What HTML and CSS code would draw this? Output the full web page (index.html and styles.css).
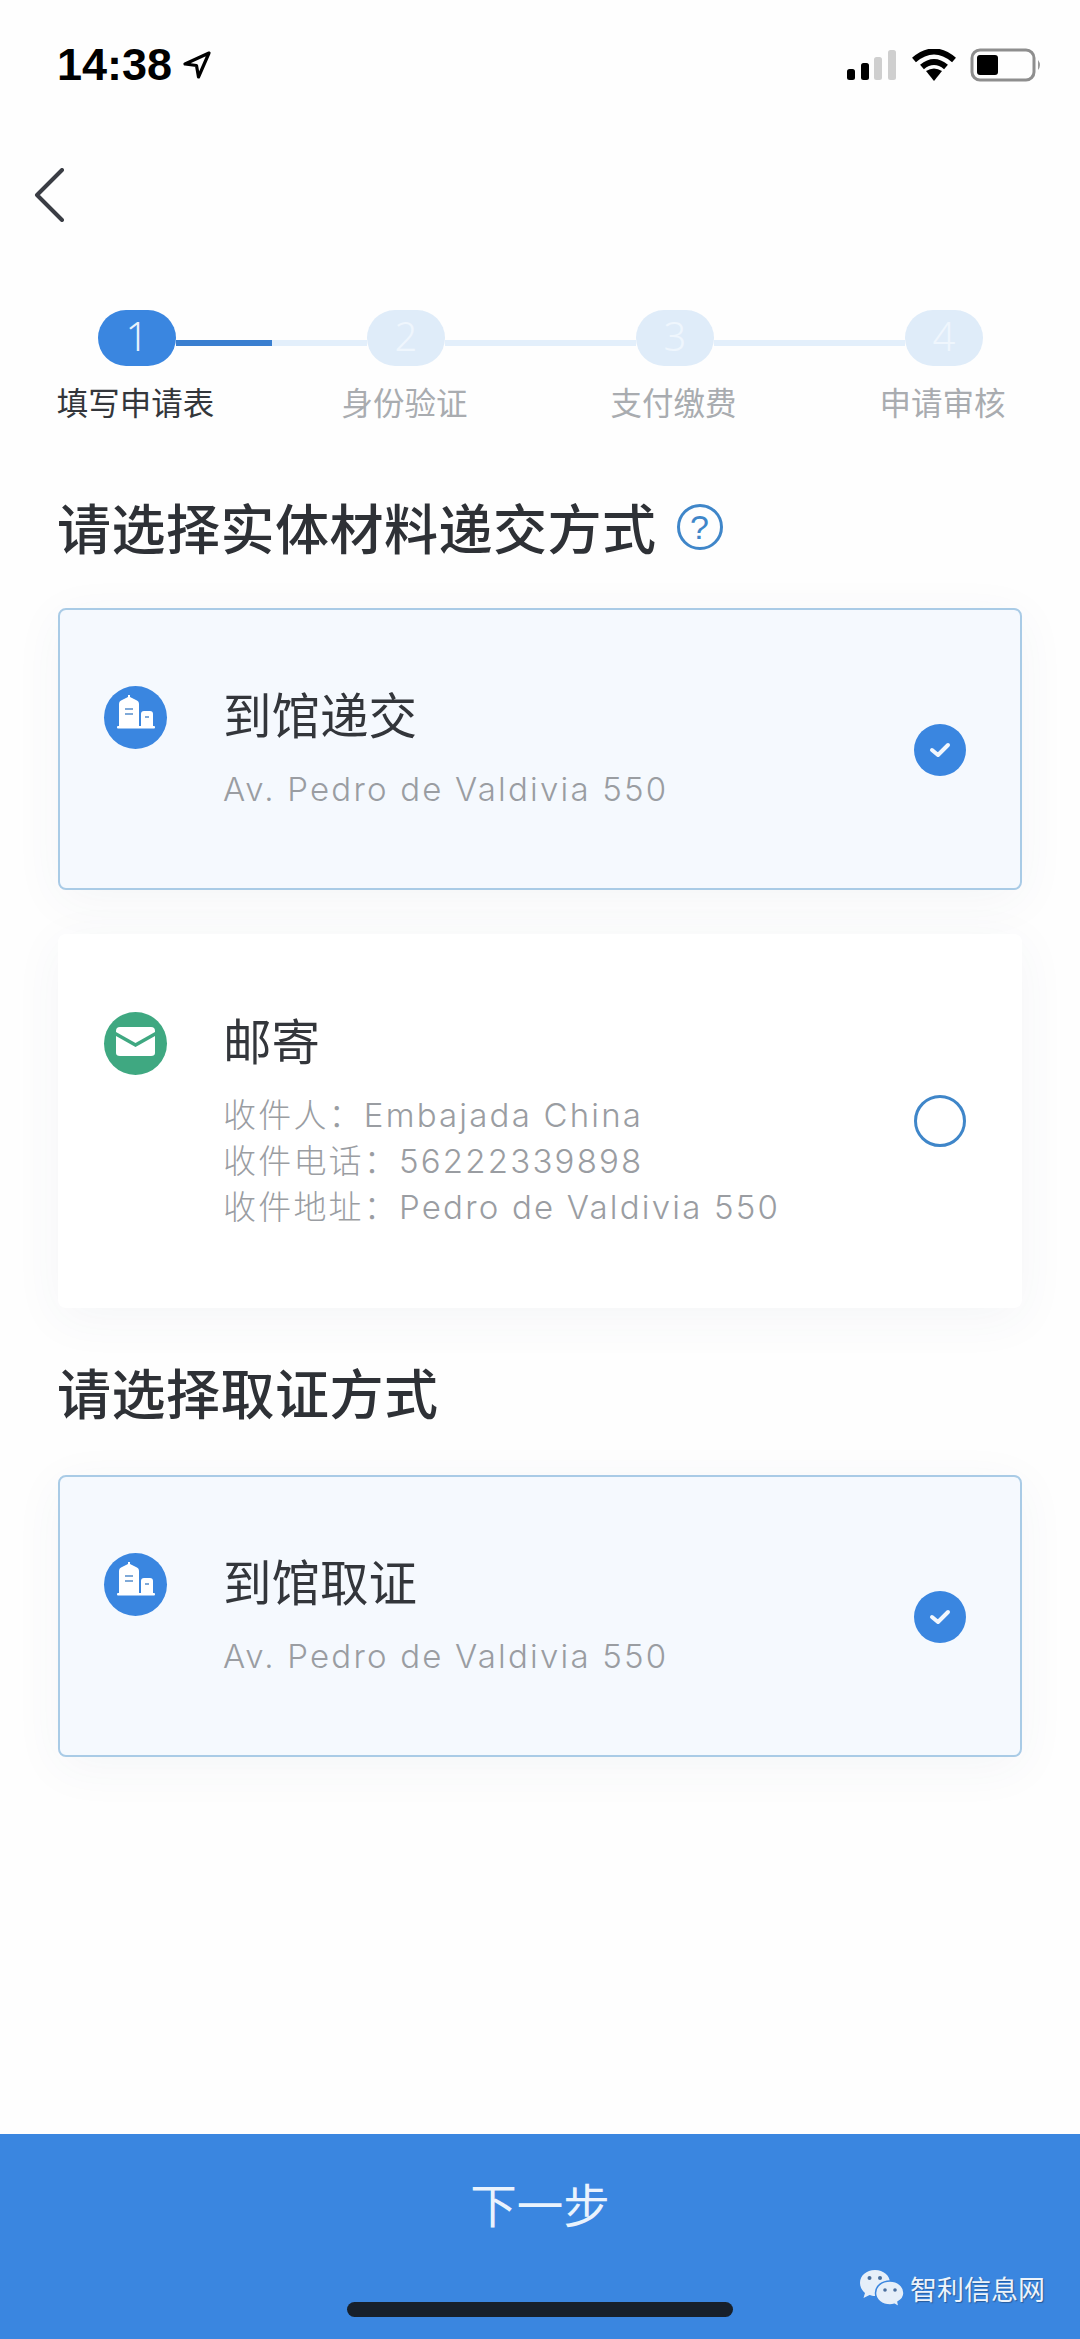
FILE: index.html
```html
<!DOCTYPE html>
<html lang="zh-CN">
<head>
  <meta charset="UTF-8" />
  <meta name="viewport" content="width=device-width, initial-scale=1.0"/>
  <title>填写申请表</title>
  <link rel="stylesheet" href="styles.css">
</head>
<body>
  <!-- Status bar -->
  <div class="status-bar">
    <div class="status-left">
      <span class="time">14:38</span>
      <svg class="location-icon" width="30" height="30" viewBox="0 0 30 30"><path d="M27 3 L3 14 L14.5 15.5 L16.5 27 Z" fill="none" stroke="#000" stroke-width="3.2" stroke-linejoin="round"/></svg>
    </div>
    <div class="status-right">
      <svg width="52" height="32" viewBox="0 0 52 32">
        <rect x="1" y="20" width="8" height="11" rx="2.5" fill="#000"/>
        <rect x="15" y="14" width="8" height="17" rx="2.5" fill="#000"/>
        <rect x="28" y="8" width="8" height="23" rx="2.5" fill="#cfcfcf"/>
        <rect x="42" y="1" width="8" height="30" rx="2.5" fill="#cfcfcf"/>
      </svg>
      <svg width="44" height="32" viewBox="0 0 44 32">
        <path d="M2 11 Q22 -6 42 11" fill="none" stroke="#000" stroke-width="6"/>
        <path d="M10 18 Q22 8 34 18" fill="none" stroke="#000" stroke-width="6"/>
        <path d="M14 22 Q22 17 30 22 L22 32 Z" fill="#000"/>
      </svg>
      <svg width="72" height="34" viewBox="0 0 72 34">
        <rect x="2" y="2" width="62" height="30" rx="8" fill="none" stroke="#8e8e8e" stroke-width="3"/>
        <rect x="7" y="7" width="21" height="20" rx="3" fill="#000"/>
        <path d="M68 12 Q72 17 68 22 Z" fill="#9a9a9a"/>
      </svg>
    </div>
  </div>

  <!-- Back -->
  <div class="nav-bar">
    <svg width="32" height="54" viewBox="0 0 32 54"><path d="M29 2 L4 27 L29 52" fill="none" stroke="#3a3d44" stroke-width="4" stroke-linecap="round" stroke-linejoin="round"/></svg>
  </div>

  <!-- Steps -->
  <div class="stepper">
    <span class="step-dot active">1</span>
    <span class="step-line half"></span>
    <span class="step-dot">2</span>
    <span class="step-line"></span>
    <span class="step-dot">3</span>
    <span class="step-line"></span>
    <span class="step-dot">4</span>
  </div>
  <div class="step-labels">
    <span class="active">填写申请表</span>
    <span>身份验证</span>
    <span>支付缴费</span>
    <span>申请审核</span>
  </div>

  <!-- Delivery -->
  <h2 class="section-title">请选择实体材料递交方式<span class="help-icon">?</span></h2>

  <div class="option-card selected">
    <span class="option-icon blue">
      <svg width="63" height="63" viewBox="0 0 63 63">
        <path d="M15 40 V18 Q15 15 18 14 L24 11 V9 H26 V11 L32 14 Q35 15 35 18 V40 Z" fill="#fff"/>
        <path d="M37 40 V28 Q37 25 40 25 H46 Q49 25 49 28 V40 Z" fill="#fff"/>
        <rect x="13" y="40" width="38" height="2.5" rx="1" fill="#fff"/>
        <rect x="21" y="22" width="8" height="2" fill="#7fa9d8"/>
        <rect x="21" y="27" width="8" height="2" fill="#7fa9d8"/>
        <rect x="41" y="30" width="4" height="2" fill="#7fa9d8"/>
      </svg>
    </span>
    <div class="option-text">
      <div class="option-title">到馆递交</div>
      <div class="option-line">Av. Pedro de Valdivia 550</div>
    </div>
    <span class="check">
      <svg width="52" height="52" viewBox="0 0 52 52"><path d="M18 26 L24 31 L34 21" fill="none" stroke="#f2f7fd" stroke-width="4" stroke-linecap="round" stroke-linejoin="round"/></svg>
    </span>
  </div>

  <div class="option-card">
    <span class="option-icon green">
      <svg width="63" height="63" viewBox="0 0 63 63">
        <path d="M12 19 Q12 15 16 15 H47 Q51 15 51 19 V20 L31.500 31 L12 20 Z" fill="#fff"/>
        <path d="M12 24 L31.500 35 L51 24 V41 Q51 44 47 44 H16 Q12 44 12 41 Z" fill="#fff"/>
      </svg>
    </span>
    <div class="option-text">
      <div class="option-title">邮寄</div>
      <div class="option-line">收件人：Embajada China</div>
      <div class="option-line">收件电话：56222339898</div>
      <div class="option-line">收件地址：Pedro de Valdivia 550</div>
    </div>
    <span class="radio"></span>
  </div>

  <!-- Pick up -->
  <h2 class="section-title">请选择取证方式</h2>

  <div class="option-card selected">
    <span class="option-icon blue">
      <svg width="63" height="63" viewBox="0 0 63 63">
        <path d="M15 40 V18 Q15 15 18 14 L24 11 V9 H26 V11 L32 14 Q35 15 35 18 V40 Z" fill="#fff"/>
        <path d="M37 40 V28 Q37 25 40 25 H46 Q49 25 49 28 V40 Z" fill="#fff"/>
        <rect x="13" y="40" width="38" height="2.500" rx="1" fill="#fff"/>
        <rect x="21" y="22" width="8" height="2" fill="#7fa9d8"/>
        <rect x="21" y="27" width="8" height="2" fill="#7fa9d8"/>
        <rect x="41" y="30" width="4" height="2" fill="#7fa9d8"/>
      </svg>
    </span>
    <div class="option-text">
      <div class="option-title">到馆取证</div>
      <div class="option-line">Av. Pedro de Valdivia 550</div>
    </div>
    <span class="check">
      <svg width="52" height="52" viewBox="0 0 52 52"><path d="M18 26 L24 31 L34 21" fill="none" stroke="#f2f7fd" stroke-width="4" stroke-linecap="round" stroke-linejoin="round"/></svg>
    </span>
  </div>

  <!-- Footer -->
  <div class="footer">
    <div class="next-btn">下一步</div>
    <div class="home-bar"></div>
    <div class="watermark">
      <svg width="44" height="38" viewBox="0 0 44 38">
        <path d="M15 0 C6.500 0 0 5.500 0 13 C0 17 2 20.500 5 23 L3.500 28 L9.500 25 C11 25.500 13 26 15 26 C22 26 30 20 30 13 C30 5.500 23.500 0 15 0 Z" fill="#e6eff9"/>
        <path d="M30 11 C22 11 15.500 16 15.500 23 C15.500 30 22 35 30 35 C31.500 35 33 34.700 34.500 34.200 L39 37 L38 32 C41.500 30 44 26.800 44 23 C44 16 37.500 11 30 11 Z" fill="#e6eff9" stroke="#3a86e0" stroke-width="1.500"/>
        <circle cx="9.500" cy="8" r="2" fill="#4a6f9e"/>
        <circle cx="20" cy="8" r="2" fill="#4a6f9e"/>
        <circle cx="25" cy="20" r="1.800" fill="#4a6f9e"/>
        <circle cx="35" cy="20" r="1.800" fill="#4a6f9e"/>
      </svg>
      <span>智利信息网</span>
    </div>
  </div>
</body>
</html>
```

FILE: styles.css
```css
* {
  margin: 0;
  padding: 0;
  box-sizing: border-box;
}

body {
  width: 1080px;
  height: 2339px;
  display: flex;
  flex-direction: column;
  position: relative;
  overflow: hidden;
  background-color: #fefefe;
  font-family: "Noto Sans CJK SC", "Noto Sans", sans-serif;
}

/* Status bar */
.status-bar {
  height: 90px;
  padding: 40px 38px 0 57px;
  display: flex;
  justify-content: space-between;
  align-items: flex-start;
}

.status-left {
  display: flex;
  align-items: center;
  gap: 10px;
  height: 50px;
}

.time {
  font-family: "Liberation Sans", Arial, sans-serif;
  font-size: 45px;
  font-weight: bold;
  line-height: 50px;
  color: #000;
}

.status-right {
  display: flex;
  align-items: center;
  gap: 14px;
  height: 50px;
}

/* Back */
.nav-bar {
  height: 220px;
  padding: 78px 0 0 33px;
}

/* Steps */
.stepper {
  display: flex;
  padding-left: 98px;
  height: 56px;
}

.step-dot {
  width: 78px;
  height: 56px;
  border-radius: 28px;
  background-color: #dfecf9;
  color: #eff6fd;
  font-family: "Noto Sans", sans-serif;
  font-size: 40px;
  font-weight: 300;
  line-height: 52px;
  text-align: center;
}

.step-dot.active {
  background-color: #3a86e0;
  color: #e8f2fc;
}

.step-line {
  width: 191px;
  height: 6px;
  margin-top: 30px;
  background-color: #e3effb;
}

.step-line.half {
  background: linear-gradient(to right, #3a7fd0 96px, #e3effb 96px);
}

.step-labels {
  display: flex;
  height: 40px;
  margin-top: 15px;
  padding-left: 1px;
}

.step-labels span {
  width: 269px;
  text-align: center;
  font-size: 31.5px;
  line-height: 40px;
  color: #a9acb0;
}

.step-labels span.active {
  color: #33363b;
}

/* Sections */
.section-title {
  height: 76px;
  margin: 68px 58px 43px 57px;
  display: flex;
  align-items: center;
  gap: 20px;
  font-size: 54px;
  font-weight: 500;
  letter-spacing: 0.5px;
  line-height: 76px;
  color: #2e3136;
}

.option-card + .section-title {
  margin-top: 2px;
  margin-bottom: 45px;
}

.help-icon {
  width: 46px;
  height: 46px;
  border-radius: 50%;
  border: 3px solid #3f86c9;
  font-family: "Liberation Sans", Arial, sans-serif;
  font-size: 34px;
  font-weight: normal;
  letter-spacing: 0;
  line-height: 40px;
  text-align: center;
  color: #3f86c9;
}

.option-card {
  display: flex;
  align-items: flex-start;
  margin: 0 58px 44px;
  padding: 78px 56px 0 46px;
  min-height: 374px;
  background-color: #fff;
  border-radius: 8px;
  box-shadow: 0 10px 50px rgba(60, 80, 110, 0.05);
}

.option-card.selected {
  min-height: 282px;
  padding: 76px 54px 0 44px;
  background-color: #f5f9fe;
  border: 2px solid #a9cbe6;
}

.option-icon {
  width: 63px;
  height: 63px;
  border-radius: 50%;
  flex-shrink: 0;
}

.option-icon.blue {
  background-color: #3a86e0;
}

.option-icon.green {
  background-color: #3fa881;
}

.option-text {
  flex-grow: 1;
  margin-left: 56px;
}

.option-title {
  font-size: 48.5px;
  line-height: 54px;
  margin-bottom: 26px;
  color: #33363b;
}

.option-line {
  font-family: Inter, "Noto Sans CJK SC", sans-serif;
  font-size: 33px;
  font-weight: 300;
  line-height: 46px;
  letter-spacing: 2.2px;
  color: #9a9da2;
}

.check,
.radio {
  width: 52px;
  height: 52px;
  border-radius: 50%;
  flex-shrink: 0;
  align-self: center;
  margin-top: -78px;
}

.check {
  margin-top: -75px;
  background-color: #3a86e0;
}

.radio {
  border: 3px solid #3f86c9;
}

/* Footer */
.footer {
  margin-top: auto;
  height: 205px;
  padding-top: 39px;
  display: flex;
  flex-direction: column;
  align-items: center;
  background-color: #3a86e0;
  position: relative;
}

.next-btn {
  font-size: 46.5px;
  line-height: 60px;
  color: #eaf3fd;
}

.home-bar {
  width: 386px;
  height: 15px;
  margin-top: 69px;
  border-radius: 8px;
  background-color: #17202b;
}

.watermark {
  position: absolute;
  left: 860px;
  top: 135px;
  display: flex;
  align-items: center;
  gap: 6px;
  font-size: 27px;
  line-height: 40px;
  color: #eef4fb;
  text-shadow: 1px 1px 1px rgba(20, 50, 90, 0.5);
}
```
